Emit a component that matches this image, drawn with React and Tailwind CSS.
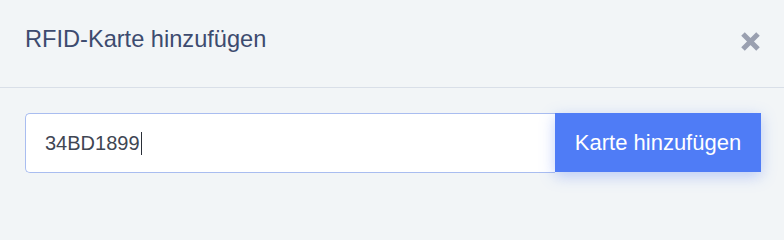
export default function App() {
  const font = { fontFamily: '"Liberation Sans", Arial, Helvetica, sans-serif' };

  return (
    <div className="w-full min-h-screen bg-[#f2f5f7]" style={font}>
      {/* header */}
      <div className="h-[88px] border-b border-[#d9dfe8] flex items-center justify-between pl-[25px] pr-[23px]">
        <h2 className="text-[23.6px] text-[#3d4b6f] font-normal leading-none -mt-[8px]">
          RFID-Karte hinzufügen
        </h2>
        <button className="w-[21px] h-[21px] -mt-[4px] text-[#9aa0b0]" aria-label="Schließen">
          <svg viewBox="0 0 21 21" width="21" height="21">
            <path d="M3 3 L18 18 M18 3 L3 18" stroke="currentColor" strokeWidth="5" strokeLinecap="butt" />
          </svg>
        </button>
      </div>

      {/* body */}
      <div className="pt-[25px] pl-[25px] pr-[23px] flex">
        <div className="flex-1 h-[60px] bg-white border border-[#a9bdf0] border-r-0 rounded-l-[5px] flex items-center pl-[19px] text-[20px] text-[#3f4653]">
          <span>34BD1899</span>
          <span className="inline-block w-[1px] h-[23px] bg-[#2a2f38] ml-[1px]" />
        </div>
        <button className="w-[206px] h-[59px] bg-[#4f7cf6] text-white text-[22px] shadow-[0_4px_14px_rgba(79,124,246,0.35)]">
          Karte hinzufügen
        </button>
      </div>
    </div>
  );
}
